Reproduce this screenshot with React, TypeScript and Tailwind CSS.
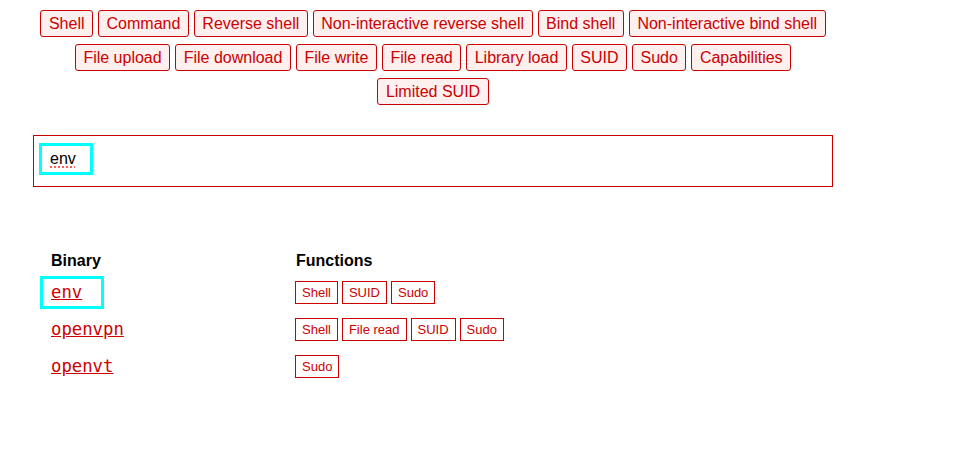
const FILTERS = [
  "Shell",
  "Command",
  "Reverse shell",
  "Non-interactive reverse shell",
  "Bind shell",
  "Non-interactive bind shell",
  "File upload",
  "File download",
  "File write",
  "File read",
  "Library load",
  "SUID",
  "Sudo",
  "Capabilities",
  "Limited SUID",
];

const BINARIES = [
  { name: "env", functions: ["Shell", "SUID", "Sudo"], focused: true },
  { name: "openvpn", functions: ["Shell", "File read", "SUID", "Sudo"] },
  { name: "openvt", functions: ["Sudo"] },
];

const App = () => {
  return (
    <div className="w-full min-h-[460px] bg-white font-['Liberation_Sans',Arial,sans-serif]">
      <div className="ml-[33px] w-[800px] pt-[10px]">
        {/* filter buttons */}
        <div className="flex flex-wrap justify-center gap-x-[5px] gap-y-[7px]">
          {FILTERS.map((f) => (
            <button
              key={f}
              className="h-[27px] px-[7.5px] border border-[#cc0000] rounded-[3px] bg-[#fff0f0] text-[#cc0000] text-[16px] leading-[25px]"
            >
              {f}
            </button>
          ))}
        </div>

        {/* search */}
        <div className="mt-[30px] h-[52px] border border-[#cc0000] pl-[5px] pt-[7px]">
          <div className="w-[54px] h-[32px] border-[3px] border-[#00ffff] pl-[8px] flex items-center">
            <span className="text-[16px] text-black underline decoration-dotted decoration-[#ff3333] underline-offset-[3px]">
              env
            </span>
          </div>
        </div>
      </div>

      {/* results */}
      <div className="ml-[40px] mt-[61px]">
        <div className="grid grid-cols-[255px_1fr] h-[26px] items-center font-bold text-[16px] text-black">
          <div className="pl-[11px]">Binary</div>
          <div className="pl-[1px]">Functions</div>
        </div>
        {BINARIES.map((b) => (
          <div key={b.name} className="grid grid-cols-[255px_1fr] h-[37px] items-center">
            <div>
              {b.focused ? (
                <div className="w-[64px] h-[33px] border-[3px] border-[#00ffff] pl-[8px] flex items-center">
                  <a className="font-['DejaVu_Sans_Mono',monospace] text-[17.3px] text-[#cc0000] underline" href="#">
                    {b.name}
                  </a>
                </div>
              ) : (
                <a className="pl-[11px] font-['DejaVu_Sans_Mono',monospace] text-[17.3px] text-[#cc0000] underline" href="#">
                  {b.name}
                </a>
              )}
            </div>
            <div className="flex gap-[4px]">
              {b.functions.map((fn) => (
                <span
                  key={fn}
                  className="h-[23px] px-[6px] border border-[#cc0000] text-[#cc0000] text-[13px] leading-[21px]"
                >
                  {fn}
                </span>
              ))}
            </div>
          </div>
        ))}
      </div>
    </div>
  );
};

export default App;
